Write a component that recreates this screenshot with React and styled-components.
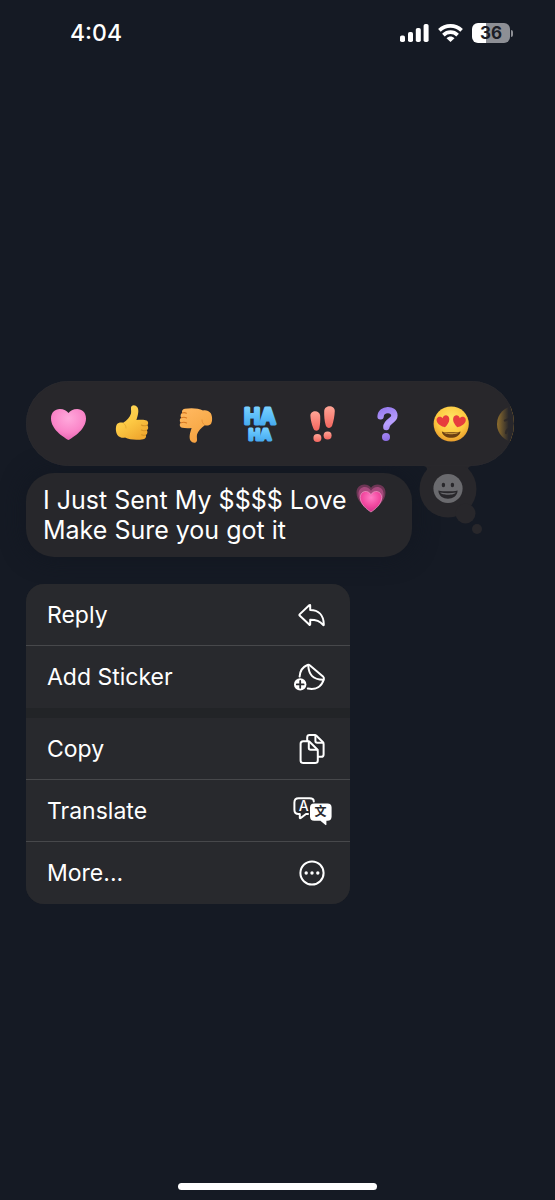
import React from "react";
import styled, { createGlobalStyle } from "styled-components";

const GlobalStyle = createGlobalStyle`
  *, *::before, *::after { box-sizing: border-box; }
  body {
    margin: 0;
    background: #151a24;
    color: #fff;
    font-family: Inter, "Liberation Sans", sans-serif;
  }
  button {
    border: 0;
    padding: 0;
    background: none;
    color: inherit;
    font: inherit;
    cursor: pointer;
  }
  svg { display: block; overflow: visible; }
`;

const Screen = styled.div`
  display: flex;
  flex-direction: column;
  min-height: 100vh;
  background: #151a24;
`;

const StatusBar = styled.header`
  display: flex;
  align-items: center;
  justify-content: space-between;
  height: 66px;
  padding: 0 42px 0 70px;
`;

const Clock = styled.time`
  font-size: 23px;
  font-weight: 500;
  line-height: 24px;
`;

const StatusIcons = styled.div`
  display: flex;
  align-items: center;
  gap: 9px;
`;

const Battery = styled.div`
  display: flex;
  align-items: center;
  gap: 1px;
`;

const BatteryBody = styled.div`
  display: grid;
  place-items: center;
  width: 38px;
  height: 20px;
  border-radius: 6px;
  background: linear-gradient(90deg, #fff ${(p) => p.$level}%, #8d8f95 ${(p) => p.$level}%);
  color: #1b1d26;
  font-size: 17px;
  font-weight: 700;
  line-height: 20px;
`;

const BatteryTip = styled.div`
  width: 2px;
  height: 7px;
  border-radius: 0 2px 2px 0;
  background: #8d8f95;
`;

const Main = styled.main`
  display: flex;
  flex: 1;
  flex-direction: column;
  align-items: flex-start;
  padding: 315px 41px 40px 26px;
`;

const ReactionArea = styled.section`
  position: relative;
  width: 100%;
  margin-bottom: 7px;
`;

const ReactionBar = styled.div`
  position: relative;
  display: flex;
  align-items: center;
  gap: 28px;
  height: 85px;
  padding-left: 24px;
  overflow: hidden;
  border-radius: 43px;
  background: #28272b;
  box-shadow: inset 0 0 1px #3a393d;

  &::after {
    content: "";
    position: absolute;
    inset: 1px 0 1px auto;
    width: 24px;
    background: linear-gradient(90deg, #28272b00, #28272b 78%);
  }
`;

const Reaction = styled.button`
  flex: none;
  width: 36px;
  height: 36px;
`;

const MorePicker = styled.button`
  position: absolute;
  top: 80px;
  right: 31px;
`;

const Bubble = styled.div`
  max-width: 386px;
  width: 100%;
  margin-bottom: 27px;
  padding: 11px 17px;
  border-radius: 28px;
  background: #27272b;
  box-shadow: 0 0 24px #121721;
  font-size: 25px;
  line-height: 31px;
`;

const BubbleText = styled.p`
  height: 31px;
  margin: 0;
  white-space: nowrap;
`;

const InlineEmoji = styled.span`
  display: inline-block;
  margin-left: 2px;
  vertical-align: -4px;
`;

const Menu = styled.div`
  display: flex;
  flex-direction: column;
  gap: 10px;
  width: 100%;
  max-width: 324px;
  overflow: hidden;
  border-radius: 18px;
  background: #222427;
`;

const MenuGroup = styled.div`
  display: flex;
  flex-direction: column;
  background: #28292d;
`;

const MenuItem = styled.button`
  display: flex;
  align-items: center;
  justify-content: space-between;
  height: 62px;
  padding: 0 18px 0 21px;
  border-bottom: 1px solid #47484b;
  font-size: 23px;
  line-height: 30px;
  text-align: left;

  &:last-child { border-bottom-color: transparent; }
`;

const HomeBar = styled.div`
  align-self: center;
  width: 36%;
  height: 7px;
  margin-bottom: 10px;
  border-radius: 4px;
  background: #fff;
`;

function SignalIcon() {
  return (
    <svg width="29" height="20" viewBox="0 0 29 20" fill="#fff" aria-label="Signal">
      <rect x="0" y="12.4" width="5" height="6.6" rx="1.8" />
      <rect x="8" y="9" width="5" height="10" rx="1.8" />
      <rect x="15.8" y="5" width="5" height="14" rx="1.8" />
      <rect x="23.6" y="1" width="5" height="18" rx="1.8" />
    </svg>
  );
}

function WifiIcon() {
  return (
    <svg width="25" height="20" viewBox="0 0 25 20" fill="none" stroke="#fff" strokeWidth="3.7" aria-label="Wi-Fi">
      <path d="M1.4 7.4 C7.6 1.3 17.4 1.3 23.6 7.4" />
      <path d="M5.4 12.1 C9.5 8.2 15.5 8.2 19.6 12.1" />
      <path d="M12.5 19 L8.5 15.2 C10.9 13 14.1 13 16.5 15.2 Z" fill="#fff" stroke="none" />
    </svg>
  );
}

function HeartEmoji() {
  return (
    <svg width="36" height="36" viewBox="0 0 36 36">
      <defs>
        <radialGradient id="pinkHeart" cx="0.5" cy="0.3" r="0.75">
          <stop offset="0" stopColor="#ffa9dc" />
          <stop offset="0.6" stopColor="#fa85c8" />
          <stop offset="1" stopColor="#e45fae" />
        </radialGradient>
      </defs>
      <path d="M18.5 34 C13 31 1 23 1 12.5 C1 6.5 5 3 9.8 3 C14 3 16.8 5 18.5 7 C20.2 5 23 3 27.2 3 C32 3 36 6.5 36 12.5 C36 23 24 31 18.5 34 Z" fill="url(#pinkHeart)" />
    </svg>
  );
}

function ThumbEmoji({ down }) {
  const id = down ? "thumbDown" : "thumbUp";
  const edge = down ? "#d87922" : "#d69525";
  return (
    <svg width="36" height="36" viewBox="0 0 36 36">
      <defs>
        <linearGradient id={id} x1="0" y1="0" x2="0.6" y2="1">
          <stop offset="0" stopColor={down ? "#f39a3b" : "#ffdc5e"} />
          <stop offset="0.55" stopColor={down ? "#f9ac4c" : "#fdc944"} />
          <stop offset="1" stopColor={down ? "#ffb65c" : "#f0aa30"} />
        </linearGradient>
      </defs>
      <g transform={down ? "rotate(180 18 18)" : undefined}>
        <path d="M17 1.6 C17.6 -1.6 21.6 -1.4 23.4 1.2 C25.4 4.6 23.8 9.6 22.4 14 C26 13.6 29.4 13.8 31.6 14.2 C34.6 14.8 34.8 18 33.2 19.2 C34.8 20.6 34.4 23.4 32.8 24.2 C34 25.8 33.4 28.2 31.8 28.9 C32.6 30.8 31.4 32.8 29.2 33.2 C23.4 34.4 15.6 34 11 31.6 C8.4 32.4 5 31.2 3.4 29 C1.6 26.4 1.4 21 2.8 18.6 C4.2 16.4 7 16.2 9.2 16.8 C12.6 14.6 16 11 17 7.4 C17.4 5 16.8 3.4 17 1.6 Z" fill={`url(#${id})`} />
        <path d="M33 19.2 C31 20 28.8 19.8 27.4 19 M32.6 24.3 C30.6 25 28.8 24.8 27.4 24 M31.6 29 C30 29.6 28.8 29.4 27.6 28.8" fill="none" stroke={edge} strokeWidth="1.1" strokeLinecap="round" />
        <path d="M9.6 17.2 C11.4 18.6 12 20 12 22" fill="none" stroke={edge} strokeWidth="0.8" strokeLinecap="round" opacity="0.6" />
      </g>
    </svg>
  );
}

const HahaText = styled.text`
  font-family: Inter, sans-serif;
  font-weight: 700;
  text-anchor: middle;
  fill: url(#hahaBlue);
  stroke: url(#hahaBlue);
  stroke-width: 3px;
  stroke-linejoin: round;
`;

function HahaEmoji() {
  return (
    <svg width="36" height="36" viewBox="0 0 36 36">
      <defs>
        <linearGradient id="hahaBlue" x1="0" y1="0" x2="0" y2="1">
          <stop offset="0" stopColor="#83d5ff" />
          <stop offset="0.5" stopColor="#5bbdf9" />
          <stop offset="1" stopColor="#3fa2ea" />
        </linearGradient>
      </defs>
      <HahaText x="18" y="18" fontSize="21">HA</HahaText>
      <HahaText x="18" y="34" fontSize="15">HA</HahaText>
    </svg>
  );
}

function ExclaimEmoji() {
  return (
    <svg width="36" height="36" viewBox="0 0 36 36">
      <defs>
        <linearGradient id="coral" x1="0" y1="0" x2="0" y2="1">
          <stop offset="0" stopColor="#ffa596" />
          <stop offset="1" stopColor="#f3665f" />
        </linearGradient>
      </defs>
      <g fill="url(#coral)">
        <path d="M4.4 10 C4 3.8 13.8 3.4 14.2 9.8 C14.4 14 14.2 18.6 13.4 22.2 C12.6 25.4 8.6 25.4 7.4 22.4 C5.8 18.6 4.6 14 4.4 10 Z" />
        <path d="M18.2 5 C18.6 -1.6 29 -1.2 28.8 5 C28.6 10 27.6 15 26.2 19.4 C25 22.8 20.8 22.6 19.8 19.4 C18.4 15 18 9.6 18.2 5 Z" />
        <circle cx="11.4" cy="32" r="4" />
        <circle cx="21.6" cy="29.4" r="4" />
      </g>
    </svg>
  );
}

function QuestionEmoji() {
  return (
    <svg width="36" height="36" viewBox="0 0 36 36">
      <defs>
        <linearGradient id="violet" gradientUnits="userSpaceOnUse" x1="10" y1="2" x2="22" y2="34">
          <stop offset="0" stopColor="#9478ec" />
          <stop offset="0.5" stopColor="#b9a0ff" />
          <stop offset="1" stopColor="#8a69e2" />
        </linearGradient>
      </defs>
      <path d="M10.6 10.4 C11 2.4 24.4 2 24.4 9.6 C24.4 15 16.6 14.8 16.4 21" fill="none" stroke="url(#violet)" strokeWidth="6.4" strokeLinecap="round" />
      <circle cx="16" cy="31" r="4" fill="url(#violet)" />
    </svg>
  );
}

function HeartEyesEmoji() {
  const heart = "M0 6 C-3 4.4 -6.4 1.6 -6.4 -2 C-6.4 -6 -1.6 -6.8 0 -3.2 C1.6 -6.8 6.4 -6 6.4 -2 C6.4 1.6 3 4.4 0 6 Z";
  return (
    <svg width="36" height="36" viewBox="0 0 36 36">
      <defs>
        <radialGradient id="yellowFace" cx="0.5" cy="0.35" r="0.65">
          <stop offset="0" stopColor="#ffe565" />
          <stop offset="0.65" stopColor="#fdc83f" />
          <stop offset="1" stopColor="#e99d2c" />
        </radialGradient>
      </defs>
      <circle cx="17.2" cy="18" r="17.6" fill="url(#yellowFace)" />
      <g fill="#e73d3d">
        <path d={heart} transform="translate(9.4 15.4) rotate(-14)" />
        <path d={heart} transform="translate(25 15.4) rotate(14)" />
      </g>
      <path d="M7.8 25.4 C12 26.6 22.4 26.6 26.6 25.4 C25.4 33.8 9 33.8 7.8 25.4 Z" fill="#6b3f12" />
      <path d="M9.4 26.2 C13.6 27.2 20.8 27.2 25 26.2 C23.6 28.8 10.8 28.8 9.4 26.2 Z" fill="#c9963a" />
    </svg>
  );
}

function CroppedEmoji() {
  return (
    <svg width="36" height="36" viewBox="0 0 36 36">
      <circle cx="17" cy="18" r="18" fill="#cf9a2e" />
      <path d="M7 14.5 L12 12.5 M8 27 C8.6 23 12 22 14 22" stroke="#553810" strokeWidth="2.4" fill="none" strokeLinecap="round" />
    </svg>
  );
}

function PickerTail() {
  return (
    <svg width="64" height="55" viewBox="0 0 64 55">
      <g fill="#28272b">
        <path d="M3 5 C8 5 9 7 7 12 L50 12 C48 7 49 5 54 5 Z" />
        <circle cx="29" cy="28" r="28.5" />
        <circle cx="46.5" cy="52.5" r="10" />
        <circle cx="58" cy="68" r="5" />
      </g>
      <circle cx="29" cy="27.5" r="14.6" fill="#6a6a6e" />
      <ellipse cx="24.4" cy="24" rx="1.7" ry="2.3" fill="#28272b" />
      <ellipse cx="33.4" cy="24" rx="1.7" ry="2.3" fill="#28272b" />
      <path d="M19.4 29.4 C25 30.6 33 30.6 38.6 29.4 C38.4 40.4 19.6 40.4 19.4 29.4 Z" fill="#28272b" />
      <path d="M21.2 31.4 C26 32.4 32 32.4 36.8 31.4 C35.6 34.4 22.4 34.4 21.2 31.4 Z" fill="#6a6a6e" />
    </svg>
  );
}

function GrowingHeart() {
  const heart = "M15 29 C10.4 26.2 2 19.6 2 11.4 C2 3 11.6 1.6 15 8 C18.4 1.6 28 3 28 11.4 C28 19.6 19.6 26.2 15 29 Z";
  return (
    <svg width="30" height="29" viewBox="0 0 30 30" role="img" aria-label="Growing heart">
      <defs>
        <radialGradient id="growing" cx="0.5" cy="0.3" r="0.75">
          <stop offset="0" stopColor="#ff7cc4" />
          <stop offset="0.55" stopColor="#f2479f" />
          <stop offset="1" stopColor="#c92b84" />
        </radialGradient>
      </defs>
      <path d="M15 27 C8 23 0 18 0 9 C0 0 10.6 -2 15 4 C19.4 -2 30 0 30 9 C30 18 22 23 15 27 Z" fill="#6d3655" />
      <path d={heart} transform="translate(0 -1)" fill="#a74a7d" />
      <path d={heart} transform="translate(2.2 4.3) scale(0.85)" fill="url(#growing)" stroke="#ef9bc7" strokeWidth="0.8" />
    </svg>
  );
}

const MenuSvg = styled.svg.attrs({ width: 40, height: 40, viewBox: "0 0 40 40", "aria-hidden": true })`
  flex: none;
  fill: none;
  stroke: #fff;
  stroke-width: 2;
  stroke-linecap: round;
  stroke-linejoin: round;
`;

function ReplyIcon() {
  return (
    <MenuSvg>
      <path d="M7.6 19.4 L17.2 10.2 Q18.2 9.4 18.2 10.6 V15 C26.4 15 31.6 20.2 31.8 29.4 Q31.8 30.8 30.8 29.6 C27.6 25.6 23.6 24.8 18.2 24.8 V29.2 Q18.2 30.4 17.2 29.6 L7.6 20.6 Q7 20 7.6 19.4 Z" />
    </MenuSvg>
  );
}

function StickerIcon() {
  return (
    <MenuSvg>
      <path d="M7.6 19.6 C8 13.6 11.4 9.6 15.4 8 Q16.8 7.4 18 8.4 L31 19.4 Q32.4 20.8 31.8 22.4 C29.8 29 24.4 33.4 15.8 31.6" />
      <path d="M16.2 8.2 C16.8 17.4 20.4 22.6 31.4 22.8" />
      <circle cx="8.2" cy="27.4" r="6.2" fill="#fff" stroke="none" />
      <path d="M8.2 24 V30.8 M4.8 27.4 H11.6" stroke="#28292d" strokeWidth="1.8" />
    </MenuSvg>
  );
}

function CopyIcon() {
  return (
    <MenuSvg>
      <path d="M15.2 11.6 V8.4 Q15.2 6 17.6 6 H22.4 Q23.6 6 24.4 6.8 L30.8 13 Q31.6 13.8 31.6 15 V25.4 Q31.6 27.8 29.2 27.8 H26.4" />
      <path d="M23.4 6.4 V12 Q23.4 13.8 25.2 13.8 H31.2" />
      <path d="M11.2 12.2 H16 Q17 12.2 17.8 13 L24.8 20 Q25.8 21 25.8 22.2 V31.4 Q25.8 34 23.2 34 H11.2 Q8.6 34 8.6 31.4 V14.8 Q8.6 12.2 11.2 12.2 Z" />
      <path d="M16.8 12.6 V19 Q16.8 20.8 18.6 20.8 H25.4" />
    </MenuSvg>
  );
}

function TranslateIcon() {
  return (
    <MenuSvg>
      <path d="M16 23 H14 L8.8 27 Q7.8 27.6 7.8 26.4 V23 H6.6 Q2.4 23 2.4 18.8 V11.4 Q2.4 7.2 6.6 7.2 H17.6 Q21.8 7.2 21.8 10.4" />
      <text x="11.6" y="20.2" fontSize="14" fontWeight="500" textAnchor="middle" fill="#fff" stroke="none">A</text>
      <path d="M22.2 12.4 H35.4 Q39.6 12.4 39.6 16.6 V25.6 Q39.6 29.8 35.4 29.8 H34.4 V33.4 Q34.4 34.8 33.2 33.8 L28.4 29.8 H22.2 Q18 29.8 18 25.6 V16.6 Q18 12.4 22.2 12.4 Z" fill="#fff" stroke="none" />
      <text x="28.6" y="25.2" fontSize="12" fontWeight="700" fontFamily='"Noto Sans CJK SC", sans-serif' textAnchor="middle" fill="#28292d" stroke="none">文</text>
    </MenuSvg>
  );
}

function MoreIcon() {
  return (
    <MenuSvg>
      <circle cx="20" cy="20" r="11.6" />
      <g fill="#fff" stroke="none">
        <circle cx="14.2" cy="20" r="1.7" />
        <circle cx="20" cy="20" r="1.7" />
        <circle cx="25.8" cy="20" r="1.7" />
      </g>
    </MenuSvg>
  );
}

const reactions = [
  { label: "Love", icon: <HeartEmoji /> },
  { label: "Like", icon: <ThumbEmoji /> },
  { label: "Dislike", icon: <ThumbEmoji down /> },
  { label: "Laugh", icon: <HahaEmoji /> },
  { label: "Emphasize", icon: <ExclaimEmoji /> },
  { label: "Question", icon: <QuestionEmoji /> },
  { label: "Heart eyes", icon: <HeartEyesEmoji /> },
  { label: "Next reaction", icon: <CroppedEmoji /> },
];

const menuGroups = [
  [
    { label: "Reply", icon: <ReplyIcon /> },
    { label: "Add Sticker", icon: <StickerIcon /> },
  ],
  [
    { label: "Copy", icon: <CopyIcon /> },
    { label: "Translate", icon: <TranslateIcon /> },
    { label: "More...", icon: <MoreIcon /> },
  ],
];

export default function App() {
  return (
    <Screen>
      <GlobalStyle />
      <StatusBar>
        <Clock>4:04</Clock>
        <StatusIcons>
          <SignalIcon />
          <WifiIcon />
          <Battery>
            <BatteryBody $level={36}>36</BatteryBody>
            <BatteryTip />
          </Battery>
        </StatusIcons>
      </StatusBar>
      <Main>
        <ReactionArea>
          <MorePicker aria-label="More reactions">
            <PickerTail />
          </MorePicker>
          <ReactionBar>
            {reactions.map((r) => (
              <Reaction key={r.label} aria-label={r.label}>{r.icon}</Reaction>
            ))}
          </ReactionBar>
        </ReactionArea>
        <Bubble>
          <BubbleText>
            I Just Sent My $$$$ Love <InlineEmoji><GrowingHeart /></InlineEmoji>
          </BubbleText>
          <BubbleText>Make Sure you got it</BubbleText>
        </Bubble>
        <Menu>
          {menuGroups.map((group) => (
            <MenuGroup key={group[0].label}>
              {group.map((item) => (
                <MenuItem key={item.label}>
                  {item.label}
                  {item.icon}
                </MenuItem>
              ))}
            </MenuGroup>
          ))}
        </Menu>
      </Main>
      <HomeBar />
    </Screen>
  );
}
